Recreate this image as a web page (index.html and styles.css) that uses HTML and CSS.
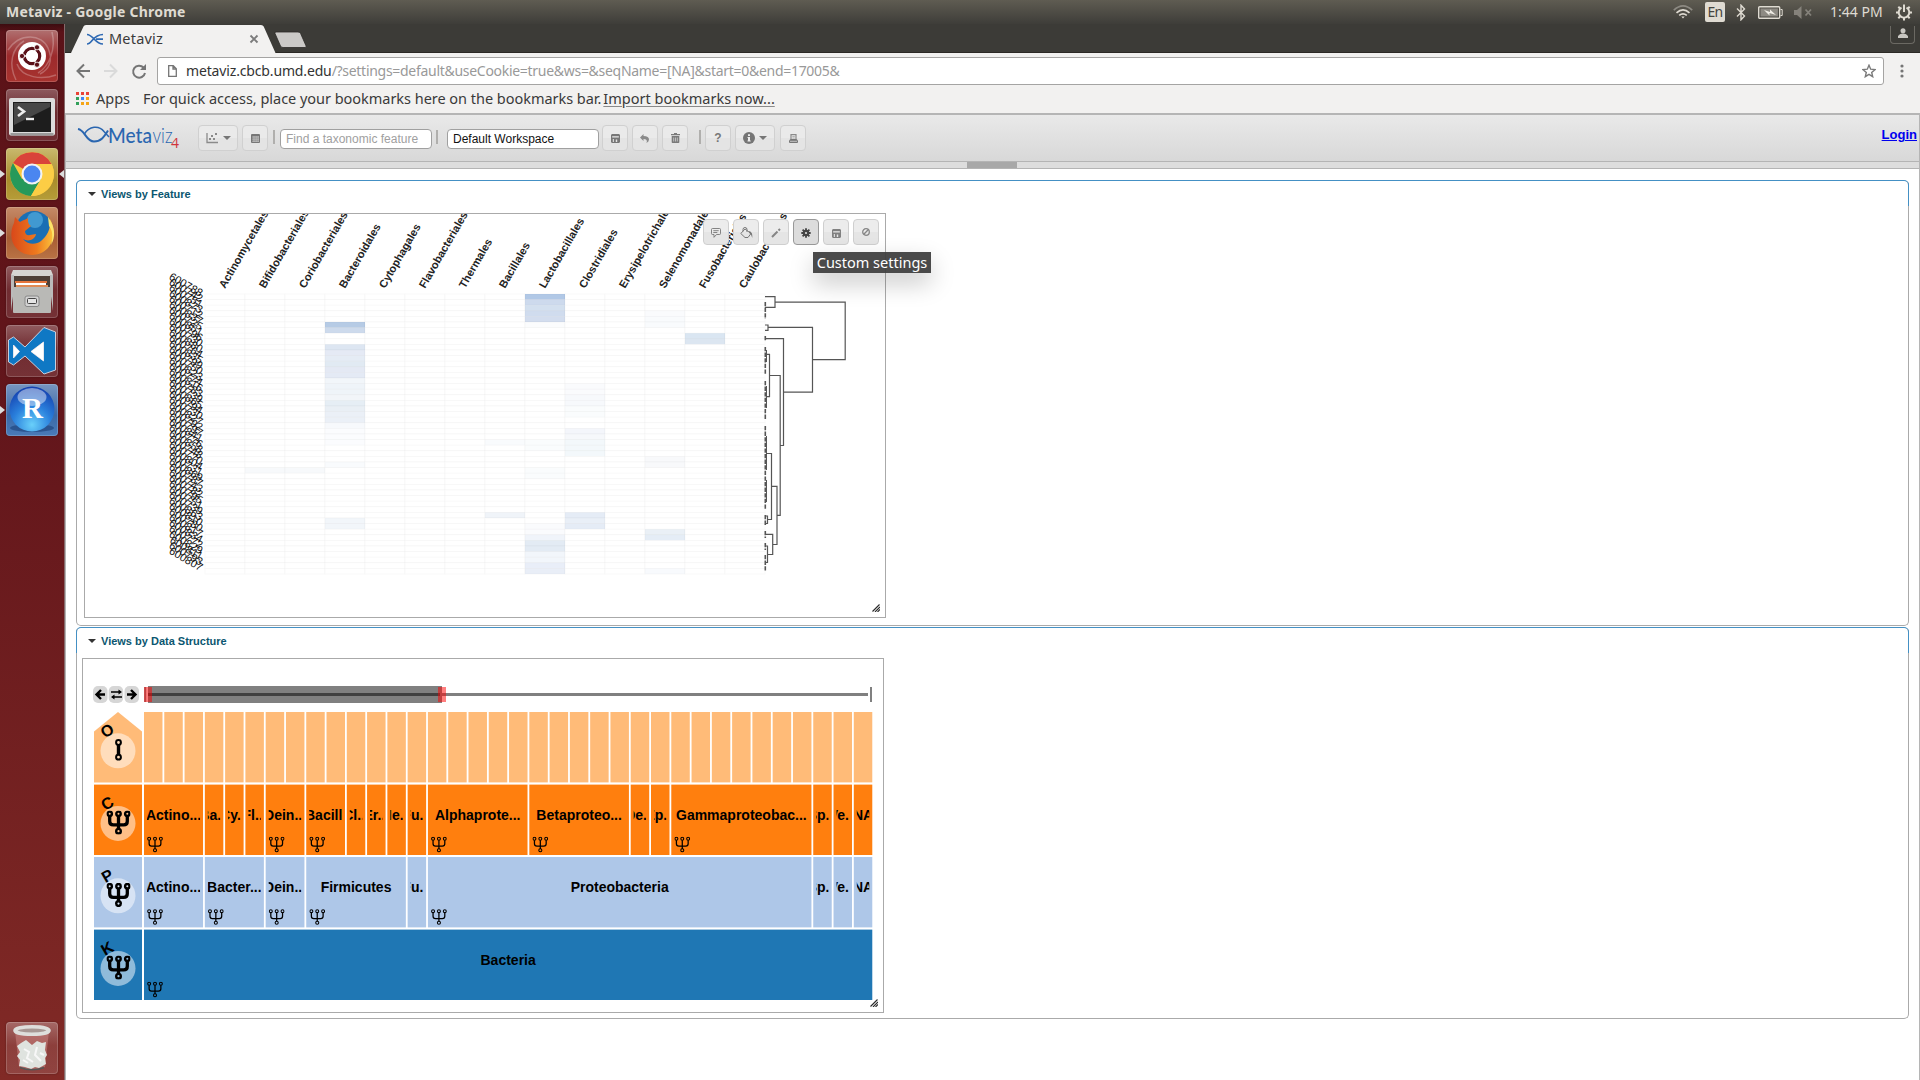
FILE: index.html
```html
<!DOCTYPE html>
<html lang="en">
<head>
<meta charset="utf-8">
<title>Metaviz</title>
<link rel="stylesheet" href="styles.css">
</head>
<body>
<svg class="defs" width="0" height="0">
  <symbol id="branch" viewBox="0 0 24 24">
    <g fill="none" stroke="#000">
      <path d="M3.2 5.5v5.2q0 3.6 3.6 3.6h10.4q3.6 0 3.6-3.6V5.5M12 5.5v13" stroke-width="var(--bw)"/>
      <circle cx="3.2" cy="3.2" r="2.2" stroke-width="var(--cw)"/><circle cx="12" cy="3.2" r="2.2" stroke-width="var(--cw)"/><circle cx="20.8" cy="3.2" r="2.2" stroke-width="var(--cw)"/><circle cx="12" cy="20.6" r="2.3" stroke-width="var(--cw)"/>
    </g>
  </symbol>
  <symbol id="floppy" viewBox="0 0 10 10"><path fill="currentColor" fill-rule="evenodd" d="M1 0h8l1 1v8L9 10H1L0 9V1zM1.3 2.6v1.2h7.4V2.6zM2 5.6V9h1.2V5.6zM5.3 6.2v2.6h1.6V6.2z"/></symbol>
  <symbol id="caret" viewBox="0 0 8 4"><path fill="currentColor" d="M0 0h8L4 4z"/></symbol>
  <symbol id="grip" viewBox="0 0 8 8"><path d="M.5 7.500l7-7M3 8l5-5M5.500 8L8 5.500" stroke="#2a2a2a" stroke-width="1.100" fill="none"/></symbol>
</svg>

<header class="panel">
  <span class="panel-title">Metaviz - Google Chrome</span>
  <div class="tray">
    <svg class="wifi" width="20" height="14" viewBox="0 0 20 14" fill="none" stroke="#dfdbd2" stroke-width="1.7"><path d="M.8 5.200Q10-3.400 19.200 5.200" stroke="#8d8a83"/><path d="M3.500 7.800Q10 2 16.500 7.800M6.200 10.300q3.800-3 7.600 0"/><path d="M8.300 11.500L10 13.600l1.700-2.100z" fill="#dfdbd2" stroke="none"/></svg>
    <span class="lang">En</span>
    <svg class="bt" width="10" height="17" viewBox="0 0 10 17" fill="none" stroke="#dfdbd2" stroke-width="1.400"><path d="M1 4.500l7.500 7.500L5 15.800V1.200L8.500 5 1 12.500"/></svg>
    <svg class="battery" width="25" height="13" viewBox="0 0 25 13"><rect x=".7" y=".7" width="21" height="11.600" rx="1" fill="none" stroke="#dfdbd2" stroke-width="1.400"/><rect x="2.500" y="2.500" width="17.400" height="8" fill="#8d8a83"/><path d="M22.500 3.500h1.700v6h-1.700" fill="none" stroke="#dfdbd2"/><path d="M6 4l6 2V3.500l6 5.500-6.500-2v2.400z" fill="#eeebe4"/></svg>
    <svg class="mute" width="18" height="13" viewBox="0 0 18 13"><path d="M0 4h3l4.500-4v13L3 9H0z" fill="#85827b"/><path d="M11.500 3.500l5.500 6m0-6l-5.500 6" stroke="#85827b" stroke-width="1.800"/></svg>
    <span class="clock">1:44 PM</span>
    <svg class="cog" width="16" height="17" viewBox="0 0 16 17" fill="none" stroke="#dfdbd2"><path d="M5.500 3.700a5.300 5.300 0 1 0 5 0" stroke-width="2"/><path d="M8 .5v7.500" stroke-width="2"/><path d="M0 8.500h3M13 8.500h3M2.300 2.800l2 2M13.700 2.800l-2 2M2.300 14.200l2-2M13.700 14.200l-2-2M8 13.500v3" stroke-width="2"/></svg>
  </div>
</header>

<div class="desktop">
  <nav class="launcher">
    <div class="tile ubuntu"><svg viewBox="0 0 52 52"><g fill="none" stroke="#fff" stroke-opacity=".25" stroke-width="1.500"><path d="M2 20C14 2 36 4 42 18s0 22-8 26M10 50C2 34 6 18 18 11M46 2c4 16-2 34-14 41M50 45C36 50 16 48 11 34"/></g><circle cx="26" cy="26" r="14" fill="#fff"/><circle cx="26" cy="26" r="7.700" fill="none" stroke="#5a1018" stroke-width="3.200"/><path d="M26 26L17 26M26 26l4.500-8.500M26 26l4.500 8.500" stroke="#fff" stroke-width="1.300"/><circle cx="26" cy="26" r="6" fill="#fff"/><g fill="#5a1018" stroke="#fff" stroke-width=".8"><circle cx="16" cy="26" r="2.600"/><circle cx="31" cy="17.300" r="2.600"/><circle cx="31" cy="34.700" r="2.600"/></g></svg></div>
    <div class="tile"><svg viewBox="0 0 52 52"><rect x="3" y="9" width="46" height="37.500" rx="2" fill="#dcdcdc"/><rect x="4.500" y="44" width="43" height="2.500" fill="#9a9a9a"/><rect x="7" y="13" width="38" height="30" fill="#1d1d1d"/><path d="M8 14h36v4L8 36z" fill="#555" opacity=".75"/><path d="M12 18l6 4.500-6 4.500" fill="none" stroke="#eee" stroke-width="2.600"/><path d="M20 30h8" stroke="#eee" stroke-width="2.400"/></svg></div>
    <div class="tile chrome"><i class="run"></i><svg viewBox="0 0 52 52"><circle cx="26" cy="26" r="22" fill="#f9c73e"/><path d="M26 26L7 15A22 22 0 0 1 45.500 16H26z" fill="#d9443a"/><path d="M7 15A22 22 0 0 0 25 48L35 31 26 26 16 31z" fill="#26995a"/><path d="M45.500 16H26v10l9 5L25 48A22 22 0 0 0 45.500 16z" fill="#fccd45"/><circle cx="26" cy="26" r="10.500" fill="#f3f3f3"/><circle cx="26" cy="26" r="8.400" fill="#4a86f0"/></svg><i class="active"></i></div>
    <div class="tile firefox"><i class="run"></i><svg viewBox="0 0 52 52"><defs><linearGradient id="fox" x1="0" y1="0" x2="1" y2="0"><stop offset="0" stop-color="#d9481a"/><stop offset=".6" stop-color="#ee7a1e"/><stop offset="1" stop-color="#fbc23c"/></linearGradient></defs><circle cx="28" cy="22.500" r="18.500" fill="#1a6fb4"/><circle cx="29" cy="13" r="8" fill="#5cb5e4" opacity=".6"/><path d="M44 12c5 9 5 21-2 29-8 9-23 9-31 1-7-7-7-18-3-26l1-6 5 5c3-2 5-2 8-4 0 4 0 6 3 8l-6 5c0 3 2 5 5 4l6-1c-1 6-8 8-13 5 5 6 13 6 18 2 7-6 10-13 9-22z" fill="url(#fox)"/><path d="M42 10c7 9 8 20 3 28 2-8 2-14-2-19z" fill="#fbe36a"/></svg></div>
    <div class="tile"><svg viewBox="0 0 52 52"><path d="M7 4h38l2 5v12H5V9z" fill="#d5d5d2"/><rect x="8" y="10" width="36" height="14" fill="#4d4038"/><path d="M9 15h32v2H9z" fill="#e5743a"/><path d="M10 17h30v2H10z" fill="#fff"/><path d="M10 19h32v3H10z" fill="#e08a54"/><path d="M5 9h3v14l-3 22zM44 9h3v36l-3-22z" fill="#bbb"/><rect x="7" y="21" width="38" height="26" rx="1" fill="#b9b9b6"/><rect x="19" y="30" width="14" height="10.500" rx="2" fill="#d3d3d3" stroke="#888"/><rect x="21.500" y="32.500" width="9" height="5" rx="1" fill="#e5e5e5" stroke="#444"/></svg></div>
    <div class="tile"><svg viewBox="0 0 52 52"><path fill-rule="evenodd" d="M2.500 15L7.500 12 19 22 38 2.500l11.500 4.500v38L38 49 19 31 7.500 40l-5-3zM7.500 20v13l6-6.500zM37.500 17L25 26.500 37.500 36z" fill="#0f78c4" stroke="#d8dce8" stroke-width=".9"/><path d="M7.500 20v13l6-6.500zM37.500 17L25 26.500 37.500 36z" fill="#fff"/></svg></div>
    <div class="tile rstudio"><i class="run"></i><svg viewBox="0 0 52 52"><defs><radialGradient id="rball" cx=".5" cy=".85" r=".85"><stop offset="0" stop-color="#69d0fa"/><stop offset=".5" stop-color="#2a80dc"/><stop offset="1" stop-color="#143fae"/></radialGradient></defs><ellipse cx="26" cy="44" rx="22" ry="4" fill="#1b3f78" opacity=".6"/><circle cx="26" cy="25" r="22.500" fill="url(#rball)"/><ellipse cx="26" cy="13" rx="14.500" ry="9" fill="#fff" opacity=".45"/><text x="26.500" y="33.500" text-anchor="middle" class="rletter">R</text></svg></div>
    <div class="tile trash"><svg viewBox="0 0 52 52"><path d="M9 9l4 36q13 6 26 0l4-36z" fill="#cf8a86" opacity=".5"/><ellipse cx="26" cy="8.500" rx="17" ry="3.800" fill="#a79793" stroke="#dededb" stroke-width="3.600"/><path d="M15 21l5-3 6 5 5-4 5 2 4-1-1 8 2 5-2 3 1 6-7 4-4-1-4 2-6-2-6-1 1-6-3-4 3-4-3-6z" fill="#dfe3df"/><path d="M18 27l5 3-2 6 6 4M31 25l-2 8 6 6M17 38l5 3M34 31l4 2" fill="none" stroke="#f7f7f7" stroke-width="2"/><path d="M14 45.500q12 4.500 24 0" fill="none" stroke="#555" stroke-width="1.500"/></svg></div>
  </nav>

  <main class="browser">
    <div class="tabstrip">
      <svg class="tabs" width="250" height="29" viewBox="0 0 250 29"><path d="M6 29L18.500 2.500Q19 1 21 1H196q2 0 2.700 1.500L210.500 29z" fill="#f2f1f0"/><path d="M210 9.500q-.6-1.500 1-1.500h22q2 0 2.600 1.500l5.500 12.500q.6 1.500-1 1.500h-22q-2 0-2.600-1.500z" fill="#cbc9c7" stroke="#2b2a27" stroke-width=".8"/><path d="M22 10.500c6 0 8 9.500 16 9.500M22 20c5 0 6-9.500 16-9.500M31 15.200h7" fill="none" stroke="#2e69b3" stroke-width="1.700"/><path d="M185.500 11.500l7 7m0-7l-7 7" stroke="#7b7b7b" stroke-width="1.900"/></svg>
      <span class="tab-title">Metaviz</span>
      <span class="user"><svg width="10" height="10" viewBox="0 0 10 10"><circle cx="5" cy="2.800" r="2.500" fill="#c9c7c2"/><path d="M0 10V8q2-3 5-2.500Q8 5 10 8v2z" fill="#c9c7c2"/></svg></span>
    </div>
    <div class="navbar">
      <svg class="navicons" width="72" height="18" viewBox="0 0 72 18" fill="none" stroke-width="2"><path d="M15 9H2.500M9 2.500L2.500 9 9 15.500" stroke="#757575"/><path d="M29 9h12.500M35 2.500L41.500 9 35 15.500" stroke="#dadada"/><path d="M68.500 5.500A6 6 0 1 0 70 11" stroke="#757575"/><path d="M71 2v6h-6z" fill="#757575"/></svg>
      <div class="omnibox">
        <svg width="9" height="12" viewBox="0 0 9 12" fill="none" stroke="#757575" stroke-width="1.300"><path d="M.7.700h4.600l3 3v7.600H.7zM5 .7v3.300h3.300"/></svg>
        <span class="url"><b>metaviz.cbcb.umd.edu</b>/?settings=default&amp;useCookie=true&amp;ws=&amp;seqName=[NA]&amp;start=0&amp;end=17005&amp;</span>
        <svg class="star" width="14" height="14" viewBox="0 0 14 14"><path d="M7 1.200l1.700 4 4.300.4-3.300 2.800 1 4.300L7 10.400l-3.700 2.300 1-4.300L1 5.600l4.300-.4z" fill="none" stroke="#7a7a7a" stroke-width="1.400"/></svg>
      </div>
      <svg class="dots" width="4" height="14" viewBox="0 0 4 14" fill="#757575"><circle cx="2" cy="2" r="1.600"/><circle cx="2" cy="7" r="1.600"/><circle cx="2" cy="12" r="1.600"/></svg>
    </div>
    <div class="bookmarks">
      <svg width="13" height="13" viewBox="0 0 13 13"><path fill="#ea4335" d="M0 0h3v3H0zM5 0h3v3H5zM10 0h3v3h-3z"/><path fill="#33a05a" d="M0 5h3v3H0zM0 10h3v3H0z"/><path fill="#4285f4" d="M5 5h3v3H5z"/><path fill="#f5a516" d="M10 5h3v3h-3zM5 10h3v3H5zM10 10h3v3h-3z"/></svg>
      <span class="apps">Apps</span>
      <span class="hint">For quick access, place your bookmarks here on the bookmarks bar.</span>
      <span class="import">Import bookmarks now...</span>
    </div>

    <div class="page">
      <div class="toolbar">
        <svg class="logo" width="104" height="26" viewBox="0 0 104 26"><g fill="none" stroke="#2a66b0"><path d="M1 4C8 5 9 16.500 17 16.500C24 16.500 27 12 31 5.500" stroke-width="2"/><path d="M7.500 9C12 1 22 0 27 6.500L32 12" stroke-width="1.500"/></g><text x="31" y="17.500" class="logo-bold" textLength="44" lengthAdjust="spacingAndGlyphs">Meta</text><text x="75.500" y="17.500" class="logo-thin" textLength="20" lengthAdjust="spacingAndGlyphs">viz</text><text x="94" y="22.500" class="logo-four">4</text></svg>
        <button class="btn wide first"><svg width="13" height="12" viewBox="0 0 13 12"><path d="M1 1v9.500h11" fill="none" stroke="#8a8a8a" stroke-width="1.300"/><g fill="#8a8a8a"><rect x="3" y="6" width="2" height="2"/><rect x="5" y="3" width="2" height="2"/><rect x="7" y="6" width="2" height="2"/><rect x="9" y="1" width="2" height="2"/></g></svg><svg width="8" height="4"><use href="#caret"/></svg></button>
        <button class="btn b-table"><svg width="9" height="9" viewBox="0 0 9 9"><rect width="9" height="9" rx="1" fill="#777"/><path d="M1 3h7M1 5.100h7M1 7.200h7M3 2v6M5.100 2v6M7.100 2v6" stroke="#ddd" stroke-width=".6"/></svg></button>
        <span class="sep s1"></span>
        <input class="field f1" placeholder="Find a taxonomic feature">
        <span class="sep s2"></span>
        <input class="field f2" value="Default Workspace">
        <button class="btn b-save"><svg width="9" height="9" viewBox="0 0 10 10"><use href="#floppy"/></svg></button>
        <button class="btn b-next"><svg width="10" height="9" viewBox="0 0 10 9"><path d="M3.500 0v2Q9 2 9 5.500 9 7.500 6.500 9q1.500-4-3-4v2L0 3.500z" fill="#8a8a8a"/></svg></button>
        <button class="btn b-next"><svg width="9" height="10" viewBox="0 0 9 10"><path fill="#7a7a7a" d="M3 0h3v1h3v1.300H0V1h3zM.7 3h7.600v6.300q0 .7-.7.700H1.400q-.7 0-.7-.7z"/><path d="M2.700 4.500v4M4.500 4.500v4M6.300 4.500v4" stroke="#ddd" stroke-width=".7"/></svg></button>
        <span class="sep s3"></span>
        <button class="btn b-help">?</button>
        <button class="btn wide b-info"><svg width="12" height="12" viewBox="0 0 12 12"><circle cx="6" cy="6" r="6" fill="#757575"/><path d="M5 2.200h2v1.700H5zM4.500 5H7v3.500h.7v1H4.500v-1H5V6h-.5z" fill="#eee"/></svg><svg width="8" height="4"><use href="#caret"/></svg></button>
        <button class="btn b-print"><svg width="9" height="9" viewBox="0 0 9 9"><path d="M2 5V.6h5V5" fill="none" stroke="#8a8a8a" stroke-width="1.200"/><path d="M3.300 2.500h2.500M3.300 4h2.500" stroke="#999" stroke-width=".7"/><path d="M0 6.500L1.500 5h6L9 6.500V8q0 1-1 1H1Q0 9 0 8z" fill="#777"/><path d="M1 7.300h7" stroke="#e5e5e5" stroke-width=".7"/></svg></button>
        <a class="login" href="#">Login</a>
      </div>
      <div class="resizer"><span></span></div>

      <div class="workspace">
        <section class="views feature">
          <h2><svg width="8" height="4"><use href="#caret"/></svg>Views by Feature</h2>
          <div class="chart heat">
            <svg id="heatmap" width="800" height="403" viewBox="85 214 800 403"></svg>
            <div class="controls">
              <button><svg width="10" height="10" viewBox="0 0 10 10" fill="none" stroke="#777" stroke-width=".9"><path d="M1.500.5h7q1 0 1 1V5.500q0 1-1 1H5.500L3 9.300V6.500H1.500q-1 0-1-1v-4q0-1 1-1zM2.300 2.700h5.400M2.300 4.500h4"/></svg></button>
              <button><svg width="13" height="12" viewBox="0 0 13 12"><path d="M5 2L.8 6.500 5 10.500h3L11 6.500zM3 4.500V2.500q0-2 2-2t2 2V5" fill="none" stroke="#777" stroke-width="1"/><path d="M9 4q4 1 3.300 7-1-4-3-5z" fill="#777"/></svg></button>
              <button><svg width="10" height="10" viewBox="0 0 10 10"><path d="M1 9l5.500-5.500M7.500 2.500L9 1" stroke="#858585" stroke-width="2"/></svg></button>
              <button class="on"><svg width="10" height="10" viewBox="0 0 10 10"><path d="M5 .3v9.400M.3 5h9.400M1.600 1.600l6.800 6.800M8.400 1.600L1.600 8.400" stroke="#444" stroke-width="1.800"/><circle cx="5" cy="5" r="3.200" fill="#444"/><circle cx="5" cy="5" r="1.100" fill="#ddd"/></svg></button>
              <button><svg width="9" height="9" viewBox="0 0 10 10"><use href="#floppy"/></svg></button>
              <button class="off"><svg width="8" height="8" viewBox="0 0 8 8" fill="none" stroke="#858585" stroke-width="1.300"><circle cx="4" cy="4" r="3.300"/><path d="M1.800 6.200l4.400-4.400"/></svg></button>
            </div>
            <div class="tip">Custom settings</div>
            <svg class="grip" width="8" height="8"><use href="#grip"/></svg>
          </div>
        </section>
        <section class="views structure">
          <h2><svg width="8" height="4"><use href="#caret"/></svg>Views by Data Structure</h2>
          <div class="chart tree">
            <svg id="icicle" width="800" height="353" viewBox="83 659 800 353"></svg>
            <svg class="grip" width="8" height="8"><use href="#grip"/></svg>
          </div>
        </section>
      </div>
    </div>
  </main>
</div>
<script src="script.js"></script>
</body>
</html>
```
FILE: styles.css
```css
* { box-sizing: border-box; }
body { margin: 0; width: 1920px; height: 1080px; overflow: hidden; display: flex; flex-direction: column; background: #fff; font-family: "Liberation Sans", Arial, sans-serif; }
svg { display: block; flex: none; }
button { font: inherit; padding: 0; }
.defs { position: absolute; }

.panel { height: 24px; flex: none; display: flex; justify-content: space-between; align-items: center; padding: 0 8px 0 6px; background: linear-gradient(#5f5c52, #3e3d39); font-family: "Noto Sans", sans-serif; color: #dfdbd2; }
.panel-title { font-weight: 700; font-size: 14px; letter-spacing: .23px; line-height: 20px; margin-top: -1px; }
.tray { display: flex; align-items: center; }
.lang { width: 20px; height: 20px; border-radius: 2px; background: #dfdbd2; color: #45443f; font-size: 14px; line-height: 20px; text-align: center; margin: 0 11px 0 12px; letter-spacing: -.6px; }
.battery { margin-left: 12px; }
.mute { margin-left: 11px; }
.clock { width: 54px; margin: -1px 12px 0 18px; font-size: 14px; white-space: nowrap; }

.desktop { flex: 1; min-height: 0; display: flex; }
.launcher { width: 64px; flex: none; display: flex; flex-direction: column; gap: 7px; padding: 6px; background: linear-gradient(#3c0c10, #5b1218 8px, #63161b 400px, #812a26); }
.tile { position: relative; width: 52px; height: 52px; border-radius: 4px; background: linear-gradient(rgba(255,255,255,.3), rgba(255,255,255,.1) 45%, rgba(255,255,255,.12)); box-shadow: inset 0 0 0 1px rgba(255,255,255,.18), 0 0 2px rgba(0,0,0,.35); }
.tile svg { width: 52px; height: 52px; }
.ubuntu { background: linear-gradient(#b07070, #9c2a2c 50%, #a8332f); }
.chrome { background: linear-gradient(#c9b96e, #a98c2c 60%, #b69d38); }
.firefox { background: linear-gradient(#c58a68, #a85d34 60%, #b97345); }
.rstudio { background: linear-gradient(#7896c0, #3a69a8 60%, #4a7bb8); }
.trash { margin-top: auto; }
.run { position: absolute; left: -6px; top: 22px; border: 4px solid transparent; border-left: 5px solid #ddd; border-right: 0; }
.active { position: absolute; right: -6px; top: 22px; border: 4px solid transparent; border-right: 5px solid #ddd; border-left: 0; }
.rletter { font: bold 29px "Liberation Serif", serif; fill: #fff; }

.browser { flex: 1; min-width: 0; display: flex; flex-direction: column; border-left: 1px solid #86696b; background: #f2f1f0; font-family: "Noto Sans", sans-serif; }
.tabstrip { height: 29px; flex: none; display: flex; background: #3c3b37; box-shadow: inset 0 -1px #2b2925; }
.tab-title { font-size: 14.500px; line-height: 20px; color: #3a3a3a; margin: 4px 0 0 -206px; letter-spacing: .2px; }
.user { width: 25px; height: 18px; margin: 2px 5px 0 auto; border: 1px solid #6b6963; border-top: 0; border-radius: 0 0 4px 4px; display: flex; align-items: center; justify-content: center; padding-bottom: 3px; }
.navbar { height: 36px; flex: none; display: flex; align-items: center; padding: 0 16px 0 10px; }
.omnibox { width: 1727px; height: 28px; margin-left: 10px; display: flex; align-items: center; padding: 0 7px 0 10px; border: 1px solid #a5a4a3; border-radius: 3px; background: #fff; }
.url { margin: -1px 0 0 9px; font-size: 14px; letter-spacing: -.29px; color: #999; white-space: nowrap; }
.url b { font-weight: 400; color: #333; letter-spacing: -.15px; }
.star { margin-left: auto; }
.dots { margin-left: auto; }
.bookmarks { height: 24px; flex: none; display: flex; align-items: center; padding: 0 11px 5px; font-size: 14.500px; color: #3a3a3a; white-space: nowrap; line-height: 19px; }
.apps { margin-left: 7px; }
.hint { margin-left: 13px; letter-spacing: -.03px; }
.import { margin-left: 2px; text-decoration: underline; text-decoration-color: #8a8a8a; text-underline-offset: 2px; }

.page { flex: 1; min-height: 0; display: flex; flex-direction: column; border: 1px solid #b5b5b5; border-width: 2px 1px 0; background: #fff; font-family: "Liberation Sans", Arial, sans-serif; }
.toolbar { height: 47px; flex: none; display: flex; padding: 10px 2px 0 11px; background: linear-gradient(#e9e9e9, #d8d8d8); border-bottom: 1px solid #b4b4b4; }
.logo-bold { font: 500 21.500px "Lato", sans-serif; fill: #2a66b0; }
.logo-thin { font: 300 21.500px "Lato", sans-serif; fill: #2a66b0; }
.logo-four { font: 14px "Open Sans", sans-serif; fill: #d0343c; }
.btn { width: 26px; height: 26px; border: 1px solid #d0d0d0; border-radius: 4px; background: linear-gradient(#eaeaea 50%, #e4e4e4 50%); display: flex; align-items: center; justify-content: center; color: #777; font-size: 12px; font-weight: 700; gap: 4px; flex: none; }
.wide { width: 40px; }
.first { margin-left: 17px; }
.b-table { margin-left: 4px; }
.b-save { margin-left: 3px; }
.b-next { margin-left: 4px; }
.b-info { margin-left: 4px; }
.b-help { margin-left: 4px; }
.b-print { margin-left: 5px; }
.sep { width: 2px; height: 14px; margin-top: 5px; background: #b0afad; flex: none; }
.s1 { margin-left: 5px; }
.s2 { margin-left: 4px; }
.s3 { margin-left: 11px; }
.field { width: 152px; height: 20px; margin: 4px 0 0; padding: 0 5px; border: 1px solid #a0a0a0; border-radius: 4px; background: #fff; font: 12px "Liberation Sans", Arial, sans-serif; color: #111; flex: none; }
.field::placeholder { color: #a0a0a0; }
.f1 { margin-left: 5px; }
.f2 { margin-left: 9px; }
.login { margin: 2px 0 0 auto; font-size: 13px; line-height: 16px; font-weight: 700; color: #0000ee; }
.resizer { height: 7px; flex: none; display: flex; justify-content: center; background: #ddd; border-bottom: 1px solid #b4b4b4; }
.resizer span { width: 50px; background: #a8a8a8; margin-right: 2px; }

.workspace { flex: 1; padding: 11px 10px 0; display: flex; flex-direction: column; gap: 1px; }
.views { border: 1px solid #aaa; border-radius: 5px; border-top-color: #4490c4; }
.views h2 { height: 25px; margin: 0 -1px; padding: 1px 0 0 11px; display: flex; align-items: center; gap: 5px; font-size: 11px; font-weight: 700; color: #0b5670; border: 1px solid #4490c4; border-width: 0 1px; border-radius: 4px 4px 0 0; }
.views h2 svg { color: #333; }
.feature { height: 446px; }
.structure { height: 392px; }
.chart { position: relative; width: 802px; border: 1px solid #aaa; }
.heat { height: 405px; margin: 7px 0 0 7px; }
.tree { height: 355px; margin: 5px 0 0 5px; }
.grip { position: absolute; right: 5px; bottom: 5px; }
.controls { position: absolute; left: 618px; top: 5px; display: flex; gap: 4px; }
.controls button { width: 26px; height: 26px; border: 1px solid #cfcfcf; border-radius: 4px; background: linear-gradient(#ececec 50%, #e5e5e5 50%); display: flex; align-items: center; justify-content: center; color: #808080; padding-top: 2px; }
.controls .on { border-color: #999; background: #dcdcdc; }
.controls .off { padding-top: 0; }
.tip { position: absolute; left: 728px; top: 38px; width: 118px; height: 21px; background: rgba(60,60,60,.93); color: #fff; font: 14.500px/21px "Noto Sans", sans-serif; text-align: center; white-space: nowrap; box-shadow: 0 10px 25px rgba(0,0,0,.22); }
.col-label { font: bold 11px "Liberation Sans", Arial, sans-serif; fill: #222; }
.row-label { font: 11px "Liberation Sans", Arial, sans-serif; fill: #111; text-anchor: end; }
.node-label { font: bold 14px "Liberation Sans", Arial, sans-serif; text-anchor: middle; }
.level { font: 600 16px "Liberation Sans", Arial, sans-serif; text-anchor: middle; }
.small { --bw: 1.900px; --cw: 1.600px; }
.large { --bw: 3.300px; --cw: 2.400px; }
```
FILE: script.js
```js
const NS = 'http://www.w3.org/2000/svg';
function add(parent, tag, attrs, text) {
  const el = document.createElementNS(NS, tag);
  for (const k in attrs) el.setAttribute(k, attrs[k]);
  if (text) el.textContent = text;
  parent.appendChild(el);
  return el;
}

// Heatmap: orders across, samples down
const heat = document.getElementById('heatmap');
const orders = ['Actinomycetales', 'Bifidobacteriales', 'Coriobacteriales', 'Bacteroidales', 'Cytophagales', 'Flavobacteriales', 'Thermales', 'Bacillales', 'Lactobacillales', 'Clostridiales', 'Erysipelotrichales', 'Selenomonadales', 'Fusobacteriales', 'Caulobacterales'];
const X0 = 205, Y0 = 294, CW = 40, RH = 5.6;
// [column, first row, colours of consecutive rows]
const values = [
  [8, 0, '#b1c8e6 #cddaed #d3e0ef #d0dcee #d3ddee #fbfcfd'],
  [3, 5, '#b6cbe5 #cddaec'],
  [3, 9, '#dde6f2 #e5eaf5 #e5ecf5 #e1eaf3 #e4e9f4 #e4eaf5 #f2f6fa #eff4f9 #eff4f9 #f2f5f9 #e6eef5 #e9eff5 #ebf0f7 #ebf0f7 #f7f9fc #fbfcfe #fbfcfe #fbfcfe'],
  [3, 30, '#f9fbfd'], [3, 40, '#f2f6fa #f2f6fa'],
  [1, 31, '#f7f9fb'], [2, 31, '#f7f9fb'],
  [7, 26, '#f9fbfd'], [7, 39, '#f0f4f9'],
  [12, 7, '#dae6f2 #dce6f1'],
  [9, 16, '#fafbfd #fafbfd #f7f9fc #f7f9fc #fafcfd #fafcfd'],
  [9, 24, '#f4f6fb #f6f8fb #f3f8fb #f3f8fb #f3f8fb'],
  [9, 39, '#e5ecf6 #e9eff7 #e5ecf6'],
  [11, 3, '#fafbfd #f9fbfd #f9fbfd'], [11, 29, '#f8f9fb #f8f9fb'],
  [11, 42, '#eaf0f6 #e5edf6'], [11, 49, '#f8fafd'],
  [8, 26, '#fafcfd #fafcfd'], [8, 31, '#fafcfd #fafcfd'],
  [8, 41, '#fafbfd #fafbfd #f0f4fa #e3ebf4 #e3ebf4 #f2f6fb #f2f6fb #e9eef8 #e9eef7']
];
const cells = {};
values.forEach(([c, r, list]) => list.split(' ').forEach((v, i) => { cells[c + ',' + (r + i)] = v; }));
for (let r = 0; r < 50; r++) for (let c = 0; c < 14; c++) {
  add(heat, 'rect', { x: X0 + c * CW, y: Y0 + r * RH, width: CW, height: RH, fill: cells[c + ',' + r] || '#fff', stroke: '#000', 'stroke-opacity': 0.022, 'stroke-width': 1 });
}
orders.forEach((name, i) => add(heat, 'text', { class: 'col-label', transform: `translate(${X0 + i * CW + 20},289) rotate(-60)` }, name));
const samples = [788, 742, 751, 873, 712, 837, 725, 851, 796, 730, 880, 764, 835, 799, 750, 823, 774, 816, 783, 739, 865, 794, 730, 827, 792, 797, 841, 776, 858, 748, 770, 804, 731, 869, 787, 743, 782, 795, 751, 739, 863, 810, 780, 817, 834, 772, 829, 811, 793, 807];
samples.forEach((s, r) => add(heat, 'text', { class: 'row-label', transform: `translate(200,${Y0 + r * RH + 3}) rotate(30)` }, '600' + s));

// Dendrogram of the samples
add(heat, 'path', {
  fill: 'none', stroke: '#555', 'stroke-width': 1.2,
  d: 'M765 296.700H775V307.300H765M775 302.200H845.200V359.700H812.500M765 325H768V330.300H765M768 327.400H812.500V392.200H783.500M765 338.700H783.500V445.500H780.200M769.500 375.500H780.200V515.300H777M766 354.300H769.500V396.700H766M771.500 486.300H777V544.500H772.700M766 453.500H771.500V519.500H767.500M765 516H767.500V523.500H765M766 534.300H772.700V554.500H767.500M765 546H767.500V562.500H765'
});
add(heat, 'path', {
  fill: 'none', stroke: '#555', 'stroke-width': 1.6, 'stroke-dasharray': '4.300 1.300',
  d: 'M765.300 302V319M765.300 336V341M765.300 347V375M765.300 381V419M765.300 426V510M765.300 515V526M765.300 531V538M765.300 543V550M765.300 555V571'
});
add(heat, 'path', { fill: 'none', stroke: '#555', 'stroke-width': 1, d: 'M766.500 350V362M766.500 386V408M766.500 436V470M766.500 480V502' });

// Taxonomy icicle
const tree = document.getElementById('icicle');
const defs = add(tree, 'defs', {});
const PX = 144, STEP = 20.28, ROWH = 70.4;
const letters = [['O', '#ffbb78', 712], ['C', '#ff7f0e', 784.6], ['P', '#aec7e8', 857], ['K', '#1f77b4', 929.6]];
const nodes = [
  Array.from({ length: 36 }, () => ['', 1]),
  [['Actino...', 3], ['Ba...', 1], ['Cy...', 1], ['Fl...', 1], ['Dein...', 2], ['Bacilli', 2], ['Cl...', 1], ['Er...', 1], ['Ne...', 1], ['Fu...', 1], ['Alphaprote...', 5], ['Betaproteo...', 5], ['De...', 1], ['Ep...', 1], ['Gammaproteobac...', 7], ['Sp...', 1], ['Ve...', 1], ['NA', 1]],
  [['Actino...', 3], ['Bacter...', 3], ['Dein...', 2], ['Firmicutes', 5], ['Fu...', 1], ['Proteobacteria', 19], ['Sp...', 1], ['Ve...', 1], ['NA', 1]],
  [['Bacteria', 36]]
];
letters.forEach(([letter, color, y], row) => {
  if (row === 0) add(tree, 'path', { d: 'M94 731.500L118 712L142 731.500V782.400H94Z', fill: color });
  else add(tree, 'rect', { x: 94, y, width: 48, height: ROWH, fill: color });
  const cy = y + 38.8;
  add(tree, 'circle', { cx: 118, cy, r: 17.5, fill: '#fff', 'fill-opacity': 0.5 });
  add(tree, 'text', { class: 'level', transform: `translate(110,${y + 23.5}) rotate(-30)` }, letter);
  if (row === 0) {
    add(tree, 'path', { d: 'M118.500 744V756', stroke: '#000', 'stroke-width': 3.4 });
    add(tree, 'circle', { cx: 118.5, cy: 742.5, r: 2.4, fill: '#ffddbb', stroke: '#000', 'stroke-width': 2 });
    add(tree, 'circle', { cx: 118.5, cy: 757.2, r: 2.4, fill: '#ffddbb', stroke: '#000', 'stroke-width': 2 });
  } else add(tree, 'use', { href: '#branch', class: 'large', x: 106.5, y: y + 26, width: 24, height: 24 });
  let at = 0;
  nodes[row].forEach(([name, span], i) => {
    const x = PX + at * STEP, w = span * STEP - 1.8;
    add(tree, 'rect', { x, y, width: w, height: ROWH, fill: color });
    if (name) {
      const id = 'clip' + row + '-' + i;
      add(add(defs, 'clipPath', { id }), 'rect', { x: x + 3, y, width: w - 6, height: ROWH });
      const g = add(tree, 'g', { 'clip-path': `url(#${id})` });
      add(g, 'text', { class: 'node-label', x: x + w / 2, y: y + 35.4 }, name);
      if (span > 1) add(tree, 'use', { href: '#branch', class: 'small', x: x + 3, y: y + 52, width: 16, height: 16 });
    }
    at += span;
  });
});

// Navigation bar over the icicle
[93, 108.7, 124.5].forEach(x => add(tree, 'rect', { x, y: 686, width: 14.5, height: 17, rx: 5, fill: '#d6d6d6' }));
add(tree, 'path', { d: 'M105 694.500H97M101 690L96.500 694.500L101 699', fill: 'none', stroke: '#000', 'stroke-width': 2.4 });
add(tree, 'path', { d: 'M127 694.500H135M131 690L135.500 694.500L131 699', fill: 'none', stroke: '#000', 'stroke-width': 2.4 });
add(tree, 'path', { d: 'M111 692H120M122 697H113', fill: 'none', stroke: '#000', 'stroke-width': 1.4 });
add(tree, 'path', { d: 'M118.500 689.500V694.500L122 692ZM114.500 694.500V699.500L111 697Z' });
add(tree, 'path', { d: 'M148 694.500H868', stroke: '#808080', 'stroke-width': 3 });
add(tree, 'rect', { x: 148, y: 686, width: 294, height: 17, fill: '#808080' });
add(tree, 'path', { d: 'M148 694.500H440', stroke: '#404040', 'stroke-width': 3 });
add(tree, 'path', { d: 'M145.200 687V702M871 687V702', stroke: '#808080', 'stroke-width': 2 });
add(tree, 'rect', { x: 144, y: 687, width: 8, height: 15, fill: '#f00', 'fill-opacity': 0.5 });
add(tree, 'rect', { x: 438, y: 687, width: 8, height: 15, fill: '#f00', 'fill-opacity': 0.5 });
```
